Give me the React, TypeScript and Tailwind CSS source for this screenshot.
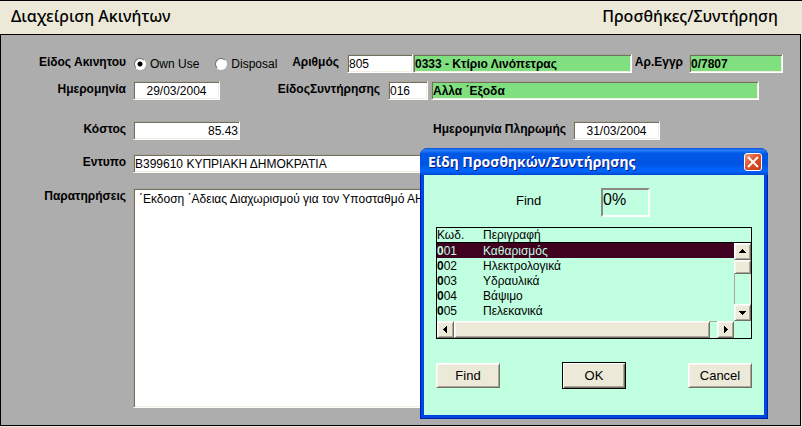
import { useState } from "react";
import type { ReactNode } from "react";

const items = [
  { code: "001", name: "Καθαρισμός" },
  { code: "002", name: "Ηλεκτρολογικά" },
  { code: "003", name: "Υδραυλικά" },
  { code: "004", name: "Βάψιμο" },
  { code: "005", name: "Πελεκανικά" },
];

// sunken edge shared by all the fields
const field =
  "block h-[19px] min-w-0 rounded-none border border-t-[#aca899] border-l-[#aca899] border-r-white border-b-white shadow-[inset_1px_1px_#716f64,inset_-1px_-1px_#f1efe2] px-px outline-none";
const white = `${field} bg-white`;
const green = `${field} bg-[#80e080] font-bold`;

// raised edge for buttons and scrollbar parts
const raised =
  "border border-t-white border-l-white border-r-[#716f64] border-b-[#716f64] shadow-[inset_1px_1px_#f8f6ee,inset_-1px_-1px_#aca899] bg-[#ece9d8]";

const Label = ({
  htmlFor,
  className,
  children,
}: {
  htmlFor?: string;
  className: string;
  children: ReactNode;
}) => (
  <label
    htmlFor={htmlFor}
    className={`shrink-0 whitespace-nowrap text-right leading-4 font-bold ${className}`}
  >
    {children}
  </label>
);

const Radio = ({
  label,
  checked,
  onChange,
}: {
  label: string;
  checked: boolean;
  onChange: () => void;
}) => (
  <label className="flex shrink-0 items-center gap-1 whitespace-nowrap">
    <input
      type="radio"
      name="kind"
      checked={checked}
      onChange={onChange}
      className="h-3 w-3 appearance-none rounded-full border border-t-[#716f64] border-l-[#716f64] border-r-white border-b-white bg-white checked:bg-[radial-gradient(circle,#000_2px,#fff_3px)]"
    />
    {label}
  </label>
);

const Arrow = ({ d, label }: { d: string; label: string }) => (
  <button
    type="button"
    aria-label={label}
    className={`flex h-[17px] w-[17px] shrink-0 items-center justify-center ${raised}`}
  >
    <svg width="9" height="9" viewBox="0 0 9 9" shapeRendering="crispEdges">
      <path d={d} fill="#000" />
    </svg>
  </button>
);

const DialogButton = ({ children }: { children: ReactNode }) => (
  <button type="button" className={`h-[25px] w-16 text-[13px] ${raised}`}>
    {children}
  </button>
);

const PickerDialog = () => {
  const [selected, setSelected] = useState("001");

  return (
    <div
      role="dialog"
      aria-labelledby="picker-title"
      className="absolute top-[148px] left-[420px] flex w-[348px] flex-col rounded-t-lg bg-[#0046e0] px-1 pb-1 shadow-[inset_-1px_-1px_#001ea0,inset_1px_0_#0019c8]"
    >
      <div className="-mx-1 flex h-[27px] items-center justify-between rounded-t-lg bg-[linear-gradient(#0a50d0,#2a80fa_8%,#0058e6_20%,#0054e3_60%,#0066ff_85%,#0048d0)] pr-[6px] pl-2">
        <h2
          id="picker-title"
          className="font-['Noto_Sans','Open_Sans',sans-serif] text-[14px] leading-5 font-bold whitespace-nowrap text-white [text-shadow:1px_1px_#0a1883]"
        >
          Είδη Προσθηκών/Συντήρησης
        </h2>
        <button
          type="button"
          aria-label="Close"
          className="flex h-[18px] w-[18px] items-center justify-center rounded-[3px] border border-white bg-[linear-gradient(135deg,#f09a80,#e0502c_45%,#c83810)]"
        >
          <svg width="14" height="14" viewBox="0 0 14 14" className="shrink-0">
            <path d="M2 2 12 12M12 2 2 12" stroke="#fff" strokeWidth="2" />
          </svg>
        </button>
      </div>

      <div className="bg-[#c0ffe0] px-3 pt-[13px] pb-[27px]">
        <div className="flex items-start pl-20">
          <label htmlFor="find" className="w-[85px] pt-[5px] text-[13px] leading-4">
            Find
          </label>
          <input
            id="find"
            defaultValue="0%"
            className="h-[29px] w-[49px] border-2 border-t-[#8c8a80] border-l-[#8c8a80] border-r-white border-b-white pb-[6px] text-[16px] outline-none"
          />
        </div>

        <div className="mt-[10px] border border-black">
          <div className="flex">
            <table className="flex-1 border-separate border-spacing-0 self-start leading-[14px]">
              <thead>
                <tr className="text-left">
                  <th className="w-[46px] border-b border-black p-0 font-normal">Κωδ.</th>
                  <th className="border-b border-black p-0 font-normal">Περιγραφή</th>
                </tr>
              </thead>
              <tbody>
                {items.map((item) => (
                  <tr
                    key={item.code}
                    onClick={() => setSelected(item.code)}
                    className={
                      item.code === selected
                        ? "h-[15px] bg-[#400020] text-[#c0ffe0]"
                        : "h-[15px]"
                    }
                  >
                    <td className="p-0">
                      <span className="font-bold">{item.code[0]}</span>
                      {item.code.slice(1)}
                    </td>
                    <td className="p-0">{item.name}</td>
                  </tr>
                ))}
              </tbody>
            </table>
            <div className="flex h-[93px] w-[17px] shrink-0 flex-col">
              <div className="h-[15px] shrink-0 border-b border-black" />
              <Arrow label="Scroll up" d="M4 2h1v1h1v1h1v1h1v1H1V5h1V4h1V3h1z" />
              <div className={`h-[14px] shrink-0 ${raised}`} />
              <div className="flex-1 border-x border-l-[#aca899] border-r-[#ece9d8]" />
              <Arrow label="Scroll down" d="M1 3h7v1H7v1H6v1H5v1H4V6H3V5H2V4H1z" />
            </div>
          </div>
          <div className="flex pr-[17px]">
            <Arrow label="Scroll left" d="M6 1v7H5V7H4V6H3V5H2V4h1V3h1V2h1V1z" />
            <div className={`flex-1 ${raised}`} />
            <div className="w-[7px] border-y border-t-[#aca899] border-b-[#ece9d8]" />
            <Arrow label="Scroll right" d="M3 1v7h1V7h1V6h1V5h1V4H6V3H5V2H4V1z" />
          </div>
        </div>

        <div className="mt-6 flex justify-between">
          <DialogButton>Find</DialogButton>
          <div className="-my-px">
            <button
              type="button"
              className="h-[27px] w-16 border border-black bg-[#ece9d8] text-[13px] shadow-[inset_1px_1px_#fff,inset_-1px_-1px_#716f64,inset_-2px_-2px_#aca899]"
            >
              OK
            </button>
          </div>
          <DialogButton>Cancel</DialogButton>
        </div>
      </div>
    </div>
  );
};

const App = () => {
  const [kind, setKind] = useState("own");

  return (
    <div className="relative overflow-hidden bg-[#ece9d8] pr-px pb-px font-['Liberation_Sans',Arial,sans-serif] text-[12px] text-black">
      <header className="-mr-px flex h-[34px] justify-between border-t border-black pt-[3px] pr-6 pl-[11px] font-['Noto_Sans','Open_Sans',sans-serif] text-[16px] leading-6 font-medium">
        <h1>Διαχείριση Ακινήτων</h1>
        <h2>Προσθήκες/Συντήρηση</h2>
      </header>

      <form className="border border-black bg-[#adadad] pt-[19px] pb-[17px]">
        <div className="flex">
          <Label className="w-[125px]">Είδος Ακινητου</Label>
          <div className="flex w-[162px] shrink-0 gap-4 pl-2">
            <Radio label="Own Use" checked={kind === "own"} onChange={() => setKind("own")} />
            <Radio label="Disposal" checked={kind === "disposal"} onChange={() => setKind("disposal")} />
          </div>
          <Label htmlFor="number" className="w-[51px]">
            Αριθμός
          </Label>
          <input id="number" defaultValue="805" className={`${white} ml-2 w-[66px]`} />
          <input aria-label="Κτίριο" defaultValue="0333 - Κτίριο Λινόπετρας" className={`${green} w-[219px]`} />
          <Label htmlFor="reg" className="w-[51px]">
            Αρ.Εγγρ
          </Label>
          <input id="reg" defaultValue="0/7807" className={`${green} ml-[6px] w-[94px]`} />
        </div>

        <div className="mt-2 flex">
          <Label htmlFor="date" className="w-[125px]">
            Ημερομηνία
          </Label>
          <input id="date" defaultValue="29/03/2004" className={`${white} ml-[7px] w-[87px] text-center`} />
          <Label htmlFor="type" className="w-[160px]">
            ΕίδοςΣυντήρησης
          </Label>
          <input id="type" defaultValue="016" className={`${white} ml-2 w-10`} />
          <input aria-label="Περιγραφή" defaultValue="Αλλα ΄Εξοδα" className={`${green} ml-[3px] w-[328px]`} />
        </div>

        <div className="mt-[21px] flex">
          <Label htmlFor="cost" className="w-[125px]">
            Κόστος
          </Label>
          <input id="cost" defaultValue="85.43" className={`${white} ml-[7px] w-[107px] text-right`} />
          <Label htmlFor="paid" className="w-[326px]">
            Ημερομηνία Πληρωμής
          </Label>
          <input id="paid" defaultValue="31/03/2004" className={`${white} ml-[7px] w-[87px] text-center`} />
        </div>

        <div className="mt-[14px] flex pr-10">
          <Label htmlFor="form" className="w-[125px]">
            Εντυπο
          </Label>
          <input id="form" defaultValue="B399610 ΚΥΠΡΙΑΚΗ ΔΗΜΟΚΡΑΤΙΑ" className={`${white} ml-[7px] flex-1`} />
        </div>

        <div className="mt-[15px] flex pr-10">
          <Label htmlFor="notes" className="w-[125px]">
            Παρατηρήσεις
          </Label>
          <textarea
            id="notes"
            wrap="off"
            defaultValue="΄Εκδοση ΄Αδειας Διαχωρισμού για τον Υποσταθμό ΑΗΚ"
            className="ml-[7px] block h-[220px] flex-1 resize-none overflow-hidden border border-t-[#aca899] border-l-[#aca899] border-r-white border-b-white bg-white px-[5px] py-[2px] leading-4 shadow-[inset_1px_1px_#716f64,inset_-1px_-1px_#f1efe2] outline-none"
          />
        </div>
      </form>

      <PickerDialog />
    </div>
  );
};

export default App;
